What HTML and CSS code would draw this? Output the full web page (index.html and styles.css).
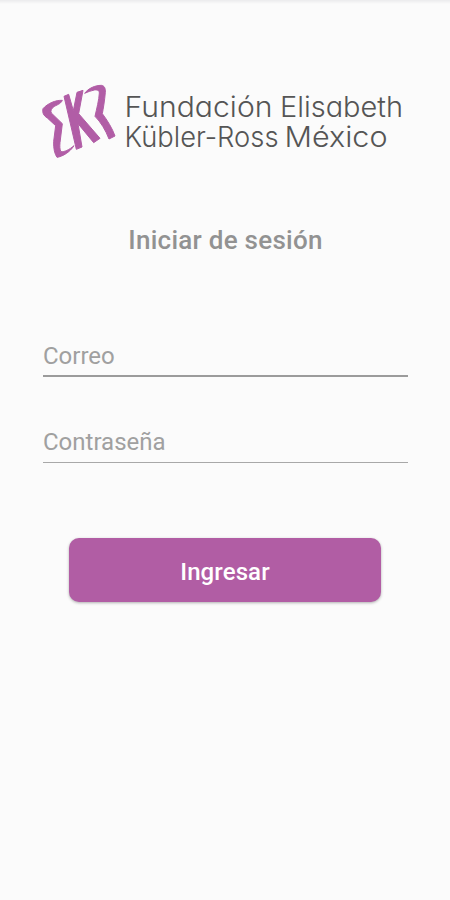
FILE: index.html
```html
<!DOCTYPE html>
<html lang="es">
<head>
    <meta charset="UTF-8">
    <meta name="viewport" content="width=device-width, initial-scale=1.0">
    <title>Iniciar de sesión</title>
    <link rel="stylesheet" href="styles.css">
</head>
<body>
    <main class="login">
        <header class="brand">
            <svg class="brand-mark" viewBox="0 0 270 258" aria-hidden="true">
                <path d="M82 67 C62 66 38 76 24 92 C21 104 26 113 37 120 L62 143 L56 190 C55 211 59 228 66 238 C84 235 105 222 117 203 C102 216 88 222 78 221 C74 215 74 204 75 194 L82 137 L49 105 C46 98 49 92 56 87 C64 80 76 80 82 67 Z"/>
                <path d="M87 55 L101 49 L115 98 L126 43 L144 37 L131 107 L195 181 L176 194 L129 137 L141 207 L124 214 Z"/>
                <path d="M149 46 C160 31 180 22 199 22 C208 23 212 31 211 43 C209 67 205 91 202 107 C217 127 232 151 240 174 L222 183 C212 157 197 132 180 115 C185 92 192 66 193 45 C193 36 187 35 178 36 C167 38 158 42 149 46 Z"/>
            </svg>
            <svg class="brand-name" viewBox="0 0 285 86">
                <text x="-0.5" y="39" textLength="148" lengthAdjust="spacingAndGlyphs">Fundación</text>
                <text x="155" y="39" textLength="123" lengthAdjust="spacingAndGlyphs">Elisabeth</text>
                <text x="-0.5" y="69" textLength="154" lengthAdjust="spacingAndGlyphs">Kübler-Ross</text>
                <text x="159.5" y="69" textLength="103" lengthAdjust="spacingAndGlyphs">México</text>
            </svg>
        </header>

        <h1 class="title">Iniciar de sesión</h1>

        <form class="form">
            <input class="field field-active" type="email" placeholder="Correo">
            <input class="field" type="password" placeholder="Contraseña">
            <button class="button" type="button">Ingresar</button>
        </form>
    </main>
</body>
</html>
```

FILE: styles.css
```css
* {
    box-sizing: border-box;
}

body {
    margin: 0;
    min-height: 900px;
    background: #fbfbfb linear-gradient(#ebebed, #fbfbfb) no-repeat 0 0 / 100% 4px;
    font-family: Roboto, sans-serif;
}

.login {
    padding: 78px 42px 0 43px;
}

.brand {
    display: flex;
    height: 86px;
    margin: 0 -7px 0 -8px;
}

.brand-mark {
    flex: none;
    width: 90px;
    height: 86px;
    fill: #b15da6;
    stroke: #b15da6;
    stroke-width: 3;
    stroke-linejoin: round;
}

.brand-name {
    flex: none;
    width: 285px;
    height: 86px;
    font-family: Inter, sans-serif;
    font-size: 28px;
    font-weight: 300;
    font-feature-settings: "cv11";
    fill: #555;
}

.title {
    margin: 60px 0 0;
    color: #929292;
    font-size: 26px;
    font-weight: 500;
    line-height: 32px;
    letter-spacing: 0.26px;
    text-align: center;
}

.form {
    display: flex;
    flex-direction: column;
    margin-top: 79px;
}

.field {
    width: 100%;
    height: 41px;
    padding: 0 0 1px;
    border: 0;
    border-bottom: 1px solid #a8a8a8;
    border-radius: 0;
    outline: none;
    background: none;
    color: #444;
    font-family: inherit;
    font-size: 24px;
}

.field::placeholder {
    color: #a0a0a0;
    opacity: 1;
}

.field-active {
    height: 42px;
    margin-bottom: 45px;
    padding: 1px 0 0;
    border-bottom: 2px solid #9b9b9b;
}

.button {
    height: 64px;
    margin: 75px 27px 0 26px;
    padding: 3px 0 0;
    border: 0;
    border-radius: 10px;
    background: #b15da4;
    box-shadow: 0 1px 3px rgba(0, 0, 0, 0.3);
    color: #fff;
    font-family: inherit;
    font-size: 24px;
    font-weight: 500;
    letter-spacing: 0.1px;
    cursor: pointer;
}
```
